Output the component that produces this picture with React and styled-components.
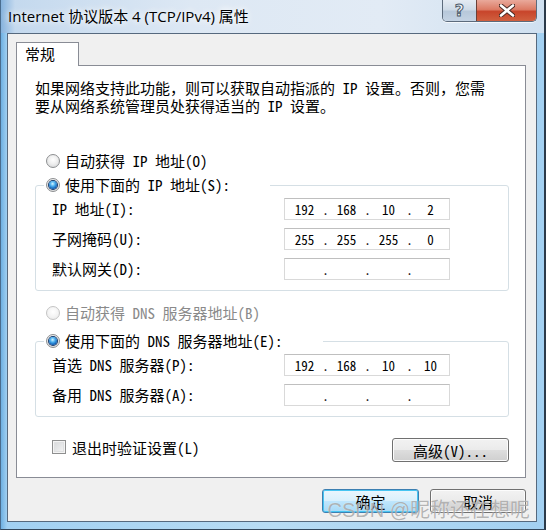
import React from 'react';
import styled, { createGlobalStyle } from 'styled-components';

const GlobalStyle = createGlobalStyle`
  html, body {
    margin: 0;
    padding: 0;
  }
  body {
    width: 546px;
    height: 530px;
    overflow: hidden;
    font-family: "Noto Sans Mono CJK SC", "Noto Sans CJK SC", monospace;
    font-size: 15px;
    color: #000;
  }
`;

const ipRows = [
  { label: 'IP 地址(I):', value: ['192', '168', '10', '2'] },
  { label: '子网掩码(U):', value: ['255', '255', '255', '0'] },
  { label: '默认网关(D):', value: ['', '', '', ''] },
];

const dnsRows = [
  { label: '首选 DNS 服务器(P):', value: ['192', '168', '10', '10'] },
  { label: '备用 DNS 服务器(A):', value: ['', '', '', ''] },
];

const Window = styled.div`
  position: relative;
  width: 546px;
  height: 530px;
  box-sizing: border-box;
  display: flex;
  flex-direction: column;
  border-left: 1px solid #4a6d8f;
  border-right: 2px solid #2c3a49;
  border-bottom: 1px solid #33475c;
  background: #a9d2f1;
`;

const TitleBar = styled.div`
  height: 33px;
  flex: none;
  display: flex;
  align-items: flex-start;
  padding: 0 7px;
  background: linear-gradient(90deg, #86b3de 0, #c4d9ee 14px, #dde8f4 35%, #e2ebf5 70%, #cfe0f0 100%);
`;

const Title = styled.div`
  font-family: "Open Sans", "Noto Sans CJK SC", sans-serif;
  font-size: 15px;
  line-height: 33px;
  color: #000;
  text-shadow: 0 0 6px #ffffff, 0 0 10px rgba(255, 255, 255, 0.9);
  white-space: nowrap;
`;

const Caption = styled.div`
  margin-left: auto;
  display: flex;
  border: 1px solid #5c6b7c;
  border-top: none;
  border-radius: 0 0 5px 5px;
  overflow: hidden;
  box-shadow: 0 1px 0 rgba(255, 255, 255, 0.7);
`;

const CaptionButton = styled.div`
  height: 21px;
  width: ${p => (p.$close ? '59px' : '33px')};
  display: flex;
  align-items: center;
  justify-content: center;
  border-left: ${p => (p.$close ? '1px solid #6b4036' : 'none')};
  background: ${p =>
    p.$close
      ? 'linear-gradient(180deg, #e9a99b 0, #dc7b65 45%, #c8452b 55%, #d0603f 100%)'
      : 'linear-gradient(180deg, #e4ebf3 0, #cfdbe7 45%, #b7c8da 55%, #c4d3e3 100%)'};
`;

const HelpGlyph = styled.span`
  font-family: "DejaVu Sans", sans-serif;
  font-weight: bold;
  font-size: 16px;
  line-height: 1;
  color: #f4f7fa;
  -webkit-text-stroke: 1px #4c5a6a;
`;

const Frame = styled.div`
  flex: 1;
  display: flex;
  padding: 0 7px 7px 6px;
  background: linear-gradient(90deg, #6eb0e2 0, #a1d0f2 6px, #b8dcf4 50%, #a3d0f1 100%);
`;

const Client = styled.div`
  flex: 1;
  display: flex;
  flex-direction: column;
  border: 1px solid #56697e;
  background: #f0f0f0;
  padding: 8px 10px 8px 8px;
`;

const TabStrip = styled.div`
  display: flex;
  position: relative;
  z-index: 1;
`;

const Tab = styled.div`
  width: 63px;
  height: 24px;
  box-sizing: border-box;
  padding-left: 8px;
  line-height: 22px;
  background: #fff;
  border: 1px solid #898c95;
  border-bottom: none;
  margin-bottom: -1px;
`;

const Panel = styled.div`
  flex: 1;
  display: flex;
  flex-direction: column;
  background: #fff;
  border: 1px solid #898c95;
  padding: 13px 16px 0 18px;
`;

const Desc = styled.p`
  margin: 0;
  line-height: 18px;
`;

const RadioRow = styled.label`
  display: flex;
  align-items: center;
  gap: 5px;
  height: 18px;
  line-height: 18px;
  padding-left: ${p => (p.$legend ? '0' : '11px')};
  margin-top: ${p => p.$top || 0}px;
  color: ${p => (p.$disabled ? '#8a8a8a' : '#000')};
  white-space: nowrap;
`;

const RadioDot = styled.span`
  width: 14px;
  height: 14px;
  flex: none;
  box-sizing: border-box;
  border-radius: 50%;
  border: 1px solid ${p => (p.$disabled ? '#c4c4c4' : '#8d8f91')};
  background: ${p =>
    p.$disabled
      ? 'radial-gradient(circle at 50% 40%, #ffffff 0, #f4f4f4 50%, #e6e6e6 100%)'
      : 'radial-gradient(circle at 50% 40%, #ffffff 0, #efefef 45%, #cfd1d3 100%)'};
  display: flex;
  align-items: center;
  justify-content: center;

  &::after {
    content: '';
    display: ${p => (p.$checked ? 'block' : 'none')};
    width: 8px;
    height: 8px;
    border-radius: 50%;
    background: radial-gradient(circle at 45% 35%, #d4f4ff 0, #4cb0ef 35%, #1162b8 70%, #0b3a78 100%);
    box-shadow: 0 0 0 1px #173b6c;
  }
`;

const Group = styled.fieldset`
  margin: ${p => p.$top}px 0 0;
  padding: 0;
  min-width: 0;
  border: 1px solid #d5dfe5;
  border-radius: 3px;
`;

const Legend = styled.legend`
  margin-left: 8px;
  padding: 0 40px 0 2px;
`;

const Rows = styled.div`
  display: grid;
  grid-template-columns: 232px 166px;
  row-gap: 8px;
  padding: 4px 0 10px 16px;
`;

const FieldLabel = styled.span`
  line-height: 22px;
  white-space: nowrap;
`;

const IpBox = styled.div`
  height: 22px;
  box-sizing: border-box;
  display: flex;
  align-items: center;
  padding-left: 2px;
  background: #fff;
  border: 1px solid #d9d9d9;
  border-top-color: #bfbfbf;
`;

const Octet = styled.span`
  width: 35px;
  text-align: center;
  font-size: 13px;
`;

const Dot = styled.span`
  width: 7px;
  text-align: center;
  font-size: 13px;
`;

const Footer = styled.div`
  display: flex;
  align-items: flex-start;
  justify-content: space-between;
  margin-top: 21px;
  padding-left: 17px;
`;

const CheckRow = styled.label`
  display: flex;
  align-items: center;
  gap: 6px;
  height: 18px;
  margin-top: 0;
`;

const CheckBox = styled.span`
  width: 14px;
  height: 14px;
  box-sizing: border-box;
  border: 1px solid #8e8f8f;
  background: linear-gradient(135deg, #d4d6d8 0, #f6f6f6 100%);
  box-shadow: inset 0 0 0 1px #f4f4f4, inset 0 0 0 2px #dfe0e1;
`;

const Button = styled.div`
  width: ${p => p.$w}px;
  height: 24px;
  box-sizing: border-box;
  display: flex;
  align-items: center;
  justify-content: center;
  border-radius: 3px;
  border: 1px solid ${p => (p.$primary ? '#3c7fb1' : '#707070')};
  background: ${p =>
    p.$primary
      ? 'linear-gradient(180deg, #eaf6fd 0, #d9f0fc 48%, #bee6fd 52%, #a7d9f5 100%)'
      : 'linear-gradient(180deg, #f2f2f2 0, #ebebeb 48%, #dddddd 52%, #cfcfcf 100%)'};
  box-shadow: ${p => (p.$primary ? 'inset 0 0 0 1px #46c5f2' : 'inset 0 0 0 1px #fcfcfc')};
  white-space: nowrap;
`;

const DialogButtons = styled.div`
  display: flex;
  justify-content: flex-end;
  gap: 11px;
  margin-top: 11px;
`;

const Watermark = styled.div`
  position: absolute;
  right: 14px;
  bottom: 6px;
  font-family: "Liberation Sans", "Noto Sans CJK SC", sans-serif;
  font-size: 20px;
  color: rgba(120, 120, 120, 0.55);
  text-shadow: 0 0 1px rgba(255, 255, 255, 0.8);
  white-space: nowrap;
  pointer-events: none;
`;

const IpField = ({ value }) => (
  <IpBox>
    {value.map((v, i) => (
      <React.Fragment key={i}>
        {i > 0 && <Dot>.</Dot>}
        <Octet>{v}</Octet>
      </React.Fragment>
    ))}
  </IpBox>
);

const Radio = ({ checked, disabled, legend, top, children }) => (
  <RadioRow $legend={legend} $top={top} $disabled={disabled}>
    <RadioDot $checked={checked} $disabled={disabled} />
    {children}
  </RadioRow>
);

const FieldRows = ({ rows }) => (
  <Rows>
    {rows.map(r => (
      <React.Fragment key={r.label}>
        <FieldLabel>{r.label}</FieldLabel>
        <IpField value={r.value} />
      </React.Fragment>
    ))}
  </Rows>
);

export default function App() {
  return (
    <>
      <GlobalStyle />
      <Window>
        <TitleBar>
          <Title>Internet 协议版本 4 (TCP/IPv4) 属性</Title>
          <Caption>
            <CaptionButton>
              <HelpGlyph>?</HelpGlyph>
            </CaptionButton>
            <CaptionButton $close>
              <svg width="16" height="13" viewBox="0 0 16 13">
                <path d="M2 1.5 L14 11.5 M14 1.5 L2 11.5" stroke="#4a2a24" strokeWidth="4.5" strokeLinecap="round" />
                <path d="M2 1.5 L14 11.5 M14 1.5 L2 11.5" stroke="#ffffff" strokeWidth="2.6" strokeLinecap="round" />
              </svg>
            </CaptionButton>
          </Caption>
        </TitleBar>
        <Frame>
          <Client>
            <TabStrip>
              <Tab>常规</Tab>
            </TabStrip>
            <Panel>
              <Desc>
                如果网络支持此功能，则可以获取自动指派的 IP 设置。否则，您需
                <br />
                要从网络系统管理员处获得适当的 IP 设置。
              </Desc>
              <Radio top={37}>自动获得 IP 地址(O)</Radio>
              <Group $top={6}>
                <Legend>
                  <Radio checked legend>使用下面的 IP 地址(S):</Radio>
                </Legend>
                <FieldRows rows={ipRows} />
              </Group>
              <Radio disabled top={13}>自动获得 DNS 服务器地址(B)</Radio>
              <Group $top={10}>
                <Legend>
                  <Radio checked legend>使用下面的 DNS 服务器地址(E):</Radio>
                </Legend>
                <FieldRows rows={dnsRows} />
              </Group>
              <Footer>
                <CheckRow>
                  <CheckBox />
                  退出时验证设置(L)
                </CheckRow>
                <Button $w={117}>高级(V)...</Button>
              </Footer>
            </Panel>
            <DialogButtons>
              <Button $w={97} $primary>确定</Button>
              <Button $w={96}>取消</Button>
            </DialogButtons>
          </Client>
        </Frame>
        <Watermark>CSDN @昵称还在想呢</Watermark>
      </Window>
    </>
  );
}
